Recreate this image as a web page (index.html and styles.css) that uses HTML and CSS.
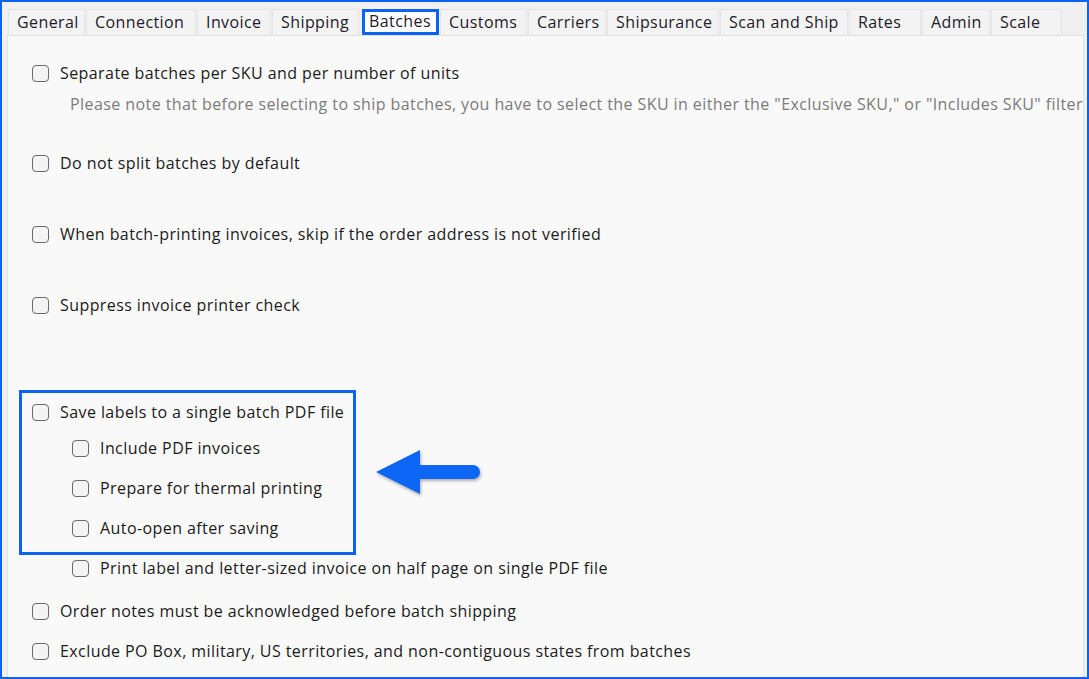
FILE: index.html
```html
<!DOCTYPE html>
<html lang="en">

<head>
    <meta charset="UTF-8">
    <title>Batches Settings</title>
    <link rel="stylesheet" href="styles.css">
</head>

<body>
    <div class="window">
        <div class="tabs">
            <div class="tab w-general">General</div>
            <div class="tab w-connection">Connection</div>
            <div class="tab w-invoice">Invoice</div>
            <div class="tab w-shipping">Shipping</div>
            <div class="tab active">Batches</div>
            <div class="tab w-customs">Customs</div>
            <div class="tab w-carriers">Carriers</div>
            <div class="tab w-shipsurance">Shipsurance</div>
            <div class="tab w-scan">Scan and Ship</div>
            <div class="tab w-rates">Rates</div>
            <div class="tab w-admin">Admin</div>
            <div class="tab w-scale">Scale</div>
        </div>

        <div class="panel">
            <label class="option first"><span class="box"></span>Separate batches per SKU and per number of units</label>
            <div class="note">Please note that before selecting to ship batches, you have to select the SKU in either the "Exclusive SKU," or "Includes SKU" filter</div>

            <label class="option gap-lg"><span class="box"></span>Do not split batches by default</label>
            <label class="option gap-xl"><span class="box"></span>When batch-printing invoices, skip if the order address is not verified</label>
            <label class="option gap-xl"><span class="box"></span>Suppress invoice printer check</label>

            <div class="highlight">
                <label class="option"><span class="box"></span>Save labels to a single batch PDF file</label>
                <label class="option sub gap-s"><span class="box"></span>Include PDF invoices</label>
                <label class="option sub gap-m"><span class="box"></span>Prepare for thermal printing</label>
                <label class="option sub gap-m"><span class="box"></span>Auto-open after saving</label>
            </div>

            <label class="option sub after-box"><span class="box"></span>Print label and letter-sized invoice on half page on single PDF file</label>
            <label class="option gap-n"><span class="box"></span>Order notes must be acknowledged before batch shipping</label>
            <label class="option gap-m"><span class="box"></span>Exclude PO Box, military, US territories, and non-contiguous states from batches</label>

            <svg class="arrow" width="120" height="56" viewBox="0 0 120 56">
                <defs>
                    <filter id="shadow" x="-20%" y="-30%" width="140%" height="170%">
                        <feDropShadow dx="1" dy="2" stdDeviation="1.5" flood-color="#000" flood-opacity="0.3" />
                    </filter>
                </defs>
                <g filter="url(#shadow)">
                    <polygon points="2,23 46,1 46,45" fill="#0a66f5" />
                    <path d="M44 16 H99 A7 7 0 0 1 99 30 H44 Z" fill="#0a66f5" />
                </g>
            </svg>
        </div>
    </div>
</body>

</html>
```

FILE: styles.css
```css
* {
    margin: 0;
    padding: 0;
    box-sizing: border-box;
}

body {
    font-family: "Open Sans", "Noto Sans", Arial, sans-serif;
    font-size: 16px;
    letter-spacing: 0.42px;
    color: #1b1b1b;
    background-color: #f0f0f0;
}

.window {
    width: 1089px;
    height: 679px;
    border: 2px solid #0b63f3;
    padding: 7px 3px 0 5px;
    display: flex;
    flex-direction: column;
    background-color: #f0f0f0;
    overflow: hidden;
}

.tabs {
    display: flex;
    height: 26px;
    padding-left: 1px;
}

.tab {
    background-color: #f3f3f3;
    border: 1px solid #e4e4e4;
    border-bottom: none;
    margin-right: 1px;
    padding-left: 8px;
    line-height: 25px;
    white-space: nowrap;
    color: #1e1a2a;
}

.tab.active {
    width: 77px;
    height: 26px;
    margin: 0 1px 0 2px;
    padding-left: 4px;
    border: 3px solid #0b63f3;
    background-color: #fff;
    line-height: 19px;
    position: relative;
    z-index: 1;
}

.w-general { width: 77px; }
.w-connection { width: 110px; }
.w-invoice { width: 74px; }
.w-shipping { width: 87px; }
.w-customs { width: 87px; }
.w-carriers { width: 78px; }
.w-shipsurance { width: 112px; }
.w-scan { width: 128px; }
.w-rates { width: 72px; }
.w-admin { width: 68px; }
.w-scale { width: 71px; }

.panel {
    flex: 1;
    position: relative;
    background-color: #f9f9f9;
    border: 1px solid #e2e2e2;
    border-bottom: none;
    padding-left: 11px;
}

.option {
    display: flex;
    align-items: center;
    height: 24px;
    padding-left: 13px;
    white-space: nowrap;
}

.option.sub {
    padding-left: 53px;
}

.box {
    width: 17px;
    height: 17px;
    margin-right: 11px;
    border: 1.5px solid #6a6a6a;
    border-radius: 4px;
    background-color: #f4f4f4;
    flex-shrink: 0;
}

.first { margin-top: 25px; }
.gap-s { margin-top: 12px; }
.gap-m { margin-top: 16px; }
.gap-n { margin-top: 19px; }
.gap-lg { margin-top: 35px; }
.gap-xl { margin-top: 47px; }

.note {
    height: 24px;
    line-height: 24px;
    margin-top: 7px;
    padding-left: 51px;
    color: #7b7b7b;
    white-space: nowrap;
}

.highlight {
    width: 337px;
    margin-top: 73px;
    padding: 7px 0 12px 0;
    border: 3px solid #0b63f3;
}

.highlight .option {
    padding-left: 10px;
}

.highlight .option.sub {
    padding-left: 50px;
}

.after-box {
    margin-top: 1px;
}

.arrow {
    position: absolute;
    left: 366px;
    top: 413px;
}
```
